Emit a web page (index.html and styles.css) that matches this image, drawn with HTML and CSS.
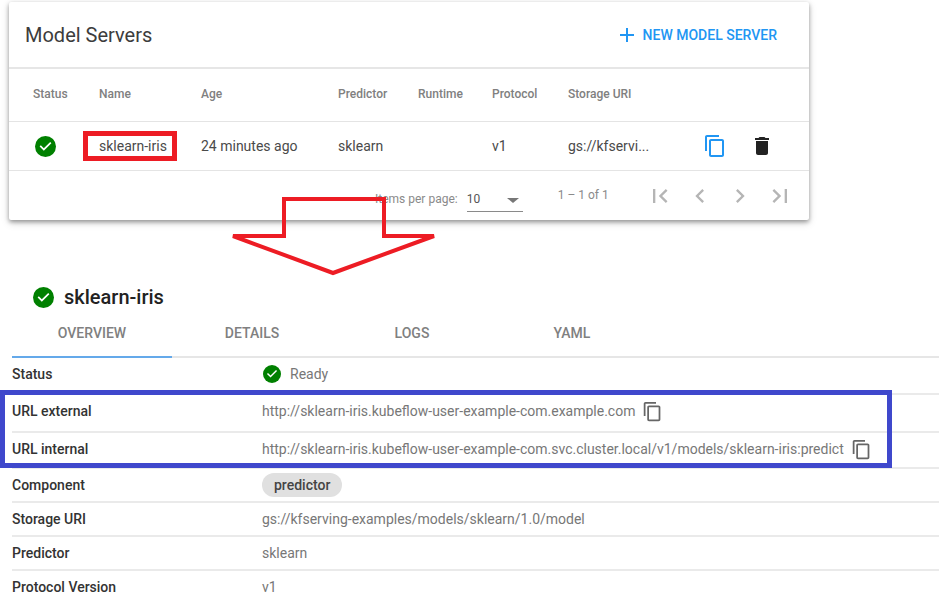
FILE: index.html
```html
<!DOCTYPE html>
<html lang="en">
<head>
  <meta charset="UTF-8">
  <title>Model Servers</title>
  <link rel="stylesheet" href="styles.css">
</head>
<body>

  <!-- Model server list -->
  <section class="card">
    <div class="card-head">
      <h2>Model Servers</h2>
      <button class="new-btn">
        <svg class="icon" viewBox="0 0 24 24"><path d="M19 13h-6v6h-2v-6H5v-2h6V5h2v6h6v2z"/></svg>
        NEW MODEL SERVER
      </button>
    </div>
    <div class="grid grid-head">
      <span>Status</span>
      <span>Name</span>
      <span>Age</span>
      <span>Predictor</span>
      <span>Runtime</span>
      <span>Protocol</span>
      <span>Storage URI</span>
    </div>
    <div class="grid grid-row">
      <svg class="status-icon" viewBox="2 2 20 20"><circle cx="12" cy="12" r="10" fill="#008000"/><path fill="#fff" d="M10 17l-5-5 1.41-1.41L10 14.17l7.59-7.59L19 8z" transform="translate(2.4 2.4) scale(.8)"/></svg>
      <span>sklearn-iris</span>
      <span>24 minutes ago</span>
      <span>sklearn</span>
      <span></span>
      <span>v1</span>
      <span>gs://kfservi...</span>
      <span class="row-actions">
        <svg class="icon copy-blue" viewBox="0 0 24 24"><path d="M16 1H4c-1.1 0-2 .9-2 2v14h2V3h12V1zm3 4H8c-1.1 0-2 .9-2 2v14c0 1.1.9 2 2 2h11c1.1 0 2-.9 2-2V7c0-1.1-.9-2-2-2zm0 16H8V7h11v14z"/></svg>
        <svg class="icon trash" viewBox="0 0 24 24"><path d="M6 19c0 1.1.9 2 2 2h8c1.1 0 2-.9 2-2V7H6v12zM19 4h-3.5l-1-1h-5l-1 1H5v2h14V4z"/></svg>
      </span>
    </div>
    <div class="paginator">
      <span class="per-page">Items per page:</span>
      <div class="page-select">
        <span>10</span>
        <i class="caret"></i>
      </div>
      <span class="range">1 – 1 of 1</span>
      <div class="page-nav">
        <svg class="nav-icon" viewBox="0 0 24 24"><path d="M18.41 16.59L13.82 12l4.59-4.59L17 6l-6 6 6 6zM6 6h2v12H6z"/></svg>
        <svg class="nav-icon" viewBox="0 0 24 24"><path d="M15.41 7.41L14 6l-6 6 6 6 1.41-1.41L10.83 12z"/></svg>
        <svg class="nav-icon" viewBox="0 0 24 24"><path d="M10 6L8.59 7.41 13.17 12l-4.58 4.59L10 18l6-6z"/></svg>
        <svg class="nav-icon" viewBox="0 0 24 24"><path d="M5.59 7.41L10.18 12l-4.59 4.59L7 18l6-6-6-6zM16 6h2v12h-2z"/></svg>
      </div>
    </div>
  </section>

  <!-- Model server details -->
  <section class="details">
    <div class="details-title">
      <svg class="status-icon" viewBox="2 2 20 20"><circle cx="12" cy="12" r="10" fill="#008000"/><path fill="#fff" d="M10 17l-5-5 1.41-1.41L10 14.17l7.59-7.59L19 8z" transform="translate(2.4 2.4) scale(.8)"/></svg>
      <h1>sklearn-iris</h1>
    </div>
    <div class="tabs">
      <span class="tab active">OVERVIEW</span>
      <span class="tab">DETAILS</span>
      <span class="tab">LOGS</span>
      <span class="tab">YAML</span>
    </div>
    <div class="info-row row-status">
      <b>Status</b>
      <span class="value">
        <svg class="status-icon small" viewBox="2 2 20 20"><circle cx="12" cy="12" r="10" fill="#008000"/><path fill="#fff" d="M10 17l-5-5 1.41-1.41L10 14.17l7.59-7.59L19 8z" transform="translate(2.4 2.4) scale(.8)"/></svg>
        Ready
      </span>
    </div>
    <div class="info-row row-url">
      <b>URL external</b>
      <span class="value">
        http://sklearn-iris.kubeflow-user-example-com.example.com
        <svg class="icon copy-gray" viewBox="0 0 24 24"><path d="M16 1H4c-1.1 0-2 .9-2 2v14h2V3h12V1zm3 4H8c-1.1 0-2 .9-2 2v14c0 1.1.9 2 2 2h11c1.1 0 2-.9 2-2V7c0-1.1-.9-2-2-2zm0 16H8V7h11v14z"/></svg>
      </span>
    </div>
    <div class="info-row row-url-b">
      <b>URL internal</b>
      <span class="value">
        http://sklearn-iris.kubeflow-user-example-com.svc.cluster.local/v1/models/sklearn-iris:predict
        <svg class="icon copy-gray" viewBox="0 0 24 24"><path d="M16 1H4c-1.1 0-2 .9-2 2v14h2V3h12V1zm3 4H8c-1.1 0-2 .9-2 2v14c0 1.1.9 2 2 2h11c1.1 0 2-.9 2-2V7c0-1.1-.9-2-2-2zm0 16H8V7h11v14z"/></svg>
      </span>
    </div>
    <div class="info-row row-chip">
      <b>Component</b>
      <span class="value"><span class="chip">predictor</span></span>
    </div>
    <div class="info-row">
      <b>Storage URI</b>
      <span class="value">gs://kfserving-examples/models/sklearn/1.0/model</span>
    </div>
    <div class="info-row">
      <b>Predictor</b>
      <span class="value">sklearn</span>
    </div>
    <div class="info-row last">
      <b>Protocol Version</b>
      <span class="value">v1</span>
    </div>
  </section>

  <!-- Annotations drawn on top of the screenshot -->
  <div class="mark-red"></div>
  <div class="mark-blue"></div>
  <svg class="mark-arrow" viewBox="0 0 210 80">
    <path d="M52 2H152V39H202L101 76L1 39H52Z"/>
  </svg>

</body>
</html>
```

FILE: styles.css
```css
* {
  box-sizing: border-box;
}

html, body {
  height: 597px;
  overflow: hidden;
}

body {
  margin: 0;
  position: relative;
  background: #fff;
  font-family: Roboto, "Liberation Sans", sans-serif;
  color: rgba(0,0,0,0.87);
}

.icon {
  width: 24px;
  height: 24px;
  flex: none;
  fill: currentColor;
}

.status-icon {
  width: 21px;
  height: 21px;
  display: block;
}

.status-icon.small {
  width: 18px;
  height: 18px;
  margin-left: 1px;
}

/* list card */
.card {
  width: 800px;
  height: 218px;
  margin: 2px 0 0 9px;
  background: #fff;
  border-radius: 2px;
  box-shadow: 0 2px 4px rgba(0,0,0,0.35), 0 3px 8px rgba(0,0,0,0.15);
}

.card-head {
  height: 67px;
  display: flex;
  align-items: center;
  justify-content: space-between;
  padding: 0 32px 0 16px;
  border-bottom: 2px solid #e6e6e6;
}

.card-head h2 {
  margin: 0;
  font-size: 20px;
  font-weight: 400;
  color: #3c3c3c;
}

.new-btn {
  display: flex;
  align-items: center;
  gap: 4px;
  border: none;
  background: none;
  padding: 0;
  font: 500 14px Roboto, sans-serif;
  color: #2196f3;
}

.grid {
  display: grid;
  grid-template-columns: 66px 102px 137px 80px 74px 76px 135px 1fr;
  align-items: center;
  padding-left: 24px;
  border-bottom: 1px solid #e4e4e4;
}

.grid-head {
  height: 53px;
  padding-bottom: 3px;
  font-size: 12px;
  font-weight: 500;
  color: #808080;
}

.grid-row {
  height: 49px;
  font-size: 14px;
  color: #4a4a4a;
}

.grid-row .status-icon {
  margin-left: 2px;
}

.row-actions {
  display: flex;
  gap: 23px;
}

.copy-blue {
  color: #2196f3;
}

.trash {
  color: #222;
}

.paginator {
  display: flex;
  height: 49px;
  padding-left: 366px;
  font-size: 12px;
  color: #8a8a8a;
  position: relative;
}

.per-page {
  margin-top: 21px;
}

.page-select {
  width: 56px;
  height: 26px;
  margin: 15px 0 0 9px;
  padding-top: 6px;
  display: flex;
  justify-content: space-between;
  color: #555;
  border-bottom: 1px solid #8a8a8a;
}

.caret {
  width: 0;
  height: 0;
  margin: 6px 4px 0 0;
  border-left: 6px solid transparent;
  border-right: 6px solid transparent;
  border-top: 5px solid #777;
}

.range {
  margin: 17px 0 0 35px;
}

.page-nav {
  display: flex;
  gap: 12px;
  margin: 11px 0 0 37px;
}

.nav-icon {
  width: 28px;
  height: 28px;
  fill: #b5b5b5;
}

/* detail page */
.details {
  margin: 65px 0 0 12px;
}

.details-title {
  display: flex;
  align-items: center;
  gap: 10px;
  height: 24px;
  margin-left: 21px;
}

.details-title h1 {
  margin: 0;
  font-size: 20px;
  font-weight: 500;
  color: #222;
}

.tabs {
  display: flex;
  height: 49px;
  padding-top: 9px;
  border-bottom: 2px solid #e6e6e6;
}

.tab {
  width: 160px;
  height: 40px;
  padding-top: 7px;
  text-align: center;
  font-size: 14px;
  font-weight: 500;
  color: #808080;
}

.tab.active {
  border-bottom: 2px solid #64a9ea;
}

.info-row {
  display: grid;
  grid-template-columns: 250px 1fr;
  align-items: center;
  height: 34px;
  border-bottom: 2px solid #eaeaea;
  font-size: 14px;
}

.info-row b {
  font-size: 14px;
  font-weight: 500;
  color: #333;
}

.value {
  display: flex;
  align-items: center;
  gap: 7px;
  color: #777;
}

.row-status {
  height: 37px;
  padding-bottom: 4px;
}

.row-status .value {
  gap: 9px;
}

.row-url {
  height: 38px;
  padding-bottom: 4px;
}

.row-url-b {
  height: 36px;
  padding-bottom: 2px;
}

.info-row.last {
  border-bottom: none;
  padding-bottom: 2px;
}

.copy-gray {
  color: #666;
  width: 21px;
  height: 21px;
}

.chip {
  padding: 4px 12px;
  border-radius: 12px;
  background: #e0e0e0;
  font-size: 14px;
  font-weight: 500;
  color: #444;
}

/* annotations */
.mark-red {
  position: absolute;
  left: 83px;
  top: 131px;
  width: 94px;
  height: 30px;
  border: 5px solid #ed1c24;
}

.mark-blue {
  position: absolute;
  left: 0;
  top: 390px;
  width: 892px;
  height: 78px;
  border: 5px solid #3f48cc;
}

.mark-arrow {
  position: absolute;
  left: 232px;
  top: 197px;
  width: 210px;
  height: 80px;
  overflow: visible;
}

.mark-arrow path {
  fill: none;
  stroke: #ed1c24;
  stroke-width: 4;
}
```
